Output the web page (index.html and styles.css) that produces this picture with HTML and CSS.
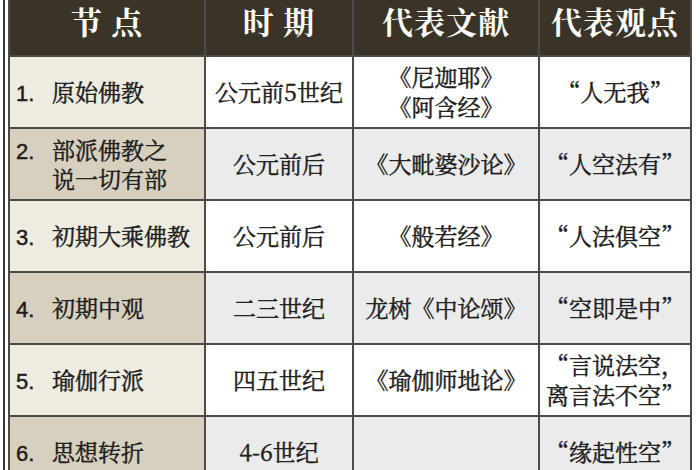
FILE: index.html
```html
<!DOCTYPE html>
<html lang="zh-CN">
<head>
<meta charset="utf-8">
<link rel="stylesheet" href="styles.css">
</head>
<body>
<div class="frame">
  <div class="grid">
    <div class="head">节 点</div>
    <div class="head">时 期</div>
    <div class="head">代表文献</div>
    <div class="head">代表观点</div>

    <div class="node light"><div class="label"><span class="num">1.</span><span class="name">原始佛教</span></div></div>
    <div class="cell">公元前5世纪</div>
    <div class="cell"><span>《尼迦耶》<br>《阿含经》</span></div>
    <div class="cell">“人无我”</div>

    <div class="node dark"><div class="label"><span class="num">2.</span><span class="name">部派佛教之<br>说一切有部</span></div></div>
    <div class="cell gray">公元前后</div>
    <div class="cell gray">《大毗婆沙论》</div>
    <div class="cell gray">“人空法有”</div>

    <div class="node light"><div class="label"><span class="num">3.</span><span class="name">初期大乘佛教</span></div></div>
    <div class="cell">公元前后</div>
    <div class="cell">《般若经》</div>
    <div class="cell">“人法俱空”</div>

    <div class="node dark"><div class="label"><span class="num">4.</span><span class="name">初期中观</span></div></div>
    <div class="cell gray">二三世纪</div>
    <div class="cell gray">龙树《中论颂》</div>
    <div class="cell gray">“空即是中”</div>

    <div class="node light"><div class="label"><span class="num">5.</span><span class="name">瑜伽行派</span></div></div>
    <div class="cell">四五世纪</div>
    <div class="cell">《瑜伽师地论》</div>
    <div class="cell"><span>“言说法空，<br>离言法不空”</span></div>

    <div class="node dark"><div class="label"><span class="num">6.</span><span class="name">思想转折</span></div></div>
    <div class="cell gray">4-6世纪</div>
    <div class="cell gray"></div>
    <div class="cell gray">“缘起性空”</div>
  </div>
</div>
</body>
</html>
```

FILE: styles.css
```css
html, body {
  margin: 0;
  padding: 0;
  background: #ffffff;
}

body {
  font-family: "Noto Serif CJK SC", "Noto Sans CJK SC", "Liberation Serif", serif;
  color: #1c1c1c;
  overflow: hidden;
  height: 470px;
}

.frame {
  margin-left: 3px;
  padding-left: 3px;
  border-left: 2px solid #3a3a3a;
  height: 470px;
}

.grid {
  display: grid;
  grid-template-columns: 194px 146px 184px 150px;
  grid-template-rows: 55px repeat(6, 70px);
  gap: 2px;
  width: fit-content;
  background: #4b4b4b;
  border: 2px solid #4b4b4b;
  border-top: 0;
}

.head {
  background: #3a3328;
  color: #fbfaf4;
  font-size: 31px;
  font-weight: 700;
  line-height: 41px;
  text-align: center;
  letter-spacing: 1px;
}

.node {
  display: flex;
  align-items: center;
  font-size: 23px;
  line-height: 29px;
  padding-left: 6px;
  -webkit-text-stroke: 0.45px #1c1c1c;
}

.label {
  display: flex;
  align-items: baseline;
}

.node.light {
  background: #eeebe0;
}

.node.dark {
  background: #d8d0be;
}

.num {
  width: 36px;
  flex: none;
  font-family: "Liberation Sans", sans-serif;
  font-size: 22px;
}

.cell {
  display: flex;
  align-items: center;
  justify-content: center;
  text-align: center;
  background: #ffffff;
  font-size: 23px;
  line-height: 30px;
  -webkit-text-stroke: 0.45px #1c1c1c;
}

.cell.gray {
  background: #ebebeb;
}
```
